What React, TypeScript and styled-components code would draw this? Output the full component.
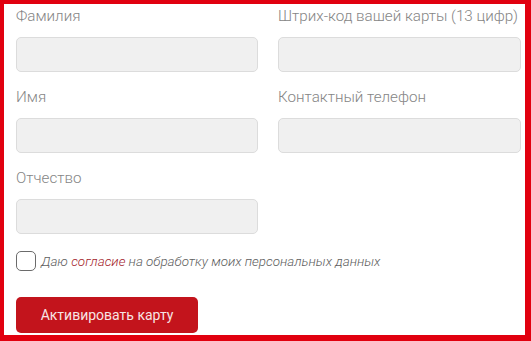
import React from "react";
import styled, { createGlobalStyle } from "styled-components";

const Global = createGlobalStyle`
  html, body { margin: 0; padding: 0; background: #fff; }
  body { font-family: Roboto, "Noto Sans", Arial, sans-serif; }
  * { box-sizing: border-box; }
`;

const Frame = styled.div`
  width: 531px;
  height: 341px;
  border-style: solid;
  border-color: #e1000f;
  border-width: 4px 6px 6px 4px;
  padding: 4px 4px 2px 12px;
  display: flex;
  flex-direction: column;
  background: #fff;
`;

const Grid = styled.div`
  display: grid;
  grid-template-columns: 242px 243px;
  column-gap: 20px;
  row-gap: 17px;
`;

const Field = styled.label`
  display: flex;
  flex-direction: column;
  gap: 12px;
`;

const Label = styled.span`
  font-size: 15.2px;
  line-height: 17px;
  font-weight: 300;
  color: #858585;
  white-space: nowrap;
`;

const Input = styled.input`
  height: 35px;
  width: 100%;
  margin: 0;
  background: #f0f0f0;
  border: 1px solid #dcdcdc;
  border-radius: 5px;
  outline: none;
  font-family: inherit;
  font-size: 14px;
  padding: 0 10px;
`;

const Consent = styled.label`
  display: flex;
  align-items: center;
  gap: 5px;
  margin-top: 17px;
  height: 20px;
`;

const Box = styled.span`
  width: 20px;
  height: 20px;
  border: 1px solid #6b6b6b;
  border-radius: 5px;
  background: #fff;
  flex-shrink: 0;
`;

const ConsentText = styled.span`
  font-size: 13.4px;
  font-style: italic;
  font-weight: 300;
  color: #5e5e5e;
  white-space: nowrap;
`;

const Link = styled.a`
  color: #a3232b;
  text-decoration: none;
`;

const Button = styled.button`
  margin-top: 26px;
  width: 182px;
  height: 36px;
  border: none;
  border-radius: 5px;
  background: #c3141c;
  color: #f7e4e4;
  font-family: inherit;
  font-size: 14px;
  font-weight: 400;
  padding: 0;
  cursor: pointer;
`;

const fields: { label: string }[] = [
  { label: "Фамилия" },
  { label: "Штрих-код вашей карты (13 цифр)" },
  { label: "Имя" },
  { label: "Контактный телефон" },
  { label: "Отчество" },
];

export default function App() {
  return (
    <>
      <Global />
      <Frame>
        <Grid>
          {fields.map((f) => (
            <Field key={f.label}>
              <Label>{f.label}</Label>
              <Input type="text" />
            </Field>
          ))}
        </Grid>
        <Consent>
          <Box />
          <ConsentText>
            Даю <Link href="#">согласие</Link> на обработку моих персональных данных
          </ConsentText>
        </Consent>
        <Button type="button">Активировать карту</Button>
      </Frame>
    </>
  );
}
